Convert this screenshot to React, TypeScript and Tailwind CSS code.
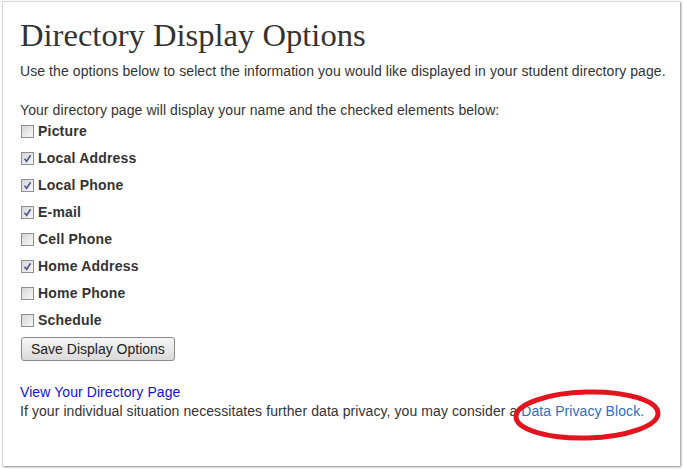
import React from 'react';

type Option = { label: string; checked: boolean };

const options: Option[] = [
    { label: 'Picture', checked: false },
    { label: 'Local Address', checked: true },
    { label: 'Local Phone', checked: true },
    { label: 'E-mail', checked: true },
    { label: 'Cell Phone', checked: false },
    { label: 'Home Address', checked: true },
    { label: 'Home Phone', checked: false },
    { label: 'Schedule', checked: false },
];

function Checkbox({ checked }: { checked: boolean }) {
    return (
        <span className="w-[13px] h-[13px] shrink-0 border border-[#8e8f8f] bg-gradient-to-br from-[#d6d6d6] to-[#f8f8f8] flex items-center justify-center">
            {checked && (
                <svg width="9" height="9" viewBox="0 0 9 9">
                    <path d="M1.5 4.8 L3.6 7.3 L7.6 1.2" fill="none" stroke="#4d5a94" strokeWidth="1.6" />
                </svg>
            )}
        </span>
    );
}

export default function App() {
    return (
        <div className="w-[683px] h-[469px] bg-white pl-[2px] pt-[1px] font-['Liberation_Sans',Arial,sans-serif] text-[#333]">
            <div className="relative w-[678px] h-[465px] bg-white border-l border-t border-[#d6d6d6] shadow-[1px_1px_2px_rgba(0,0,0,0.45)] pl-[17px] pt-[15px]">
                <h1 className="font-['Liberation_Serif','Times_New_Roman',serif] text-[32.6px] leading-[36px] text-[#333]">
                    Directory Display Options
                </h1>
                <p className="mt-[9px] text-[14px] leading-[19px] tracking-[0.08px]">
                    Use the options below to select the information you would like displayed in your student directory page.
                </p>
                <p className="mt-[20px] text-[14px] leading-[19px] tracking-[0.08px]">
                    Your directory page will display your name and the checked elements below:
                </p>
                <div className="-mt-[2px] flex flex-col">
                    {options.map(opt => (
                        <label key={opt.label} className="h-[27px] flex items-center gap-[4px] pl-[1px]">
                            <Checkbox checked={opt.checked} />
                            <span className="text-[14px] leading-[19px] font-bold tracking-[0.2px]">{opt.label}</span>
                        </label>
                    ))}
                </div>
                <button className="mt-[3px] ml-[1px] h-[24px] px-[9px] text-[14px] leading-[19px] text-[#222] border border-[#8a8a8a] rounded-[3px] bg-gradient-to-b from-[#f6f6f6] to-[#dadada]">
                    Save Display Options
                </button>
                <div className="mt-[22px] text-[14px] leading-[19px] tracking-[0.08px]">
                    <a className="text-[#1212d8] block">View Your Directory Page</a>
                    <p>
                        If your individual situation necessitates further data privacy, you may consider a{' '}
                        <a className="text-[#2a6fc6]">Data Privacy Block.</a>
                    </p>
                </div>
                <svg className="absolute left-[508px] top-[386px]" width="152" height="54" viewBox="0 0 152 54">
                    <ellipse cx="76" cy="27" rx="71" ry="23" fill="none" stroke="#e3141d" strokeWidth="5" transform="rotate(-1.5 76 27)" />
                </svg>
            </div>
        </div>
    );
}
